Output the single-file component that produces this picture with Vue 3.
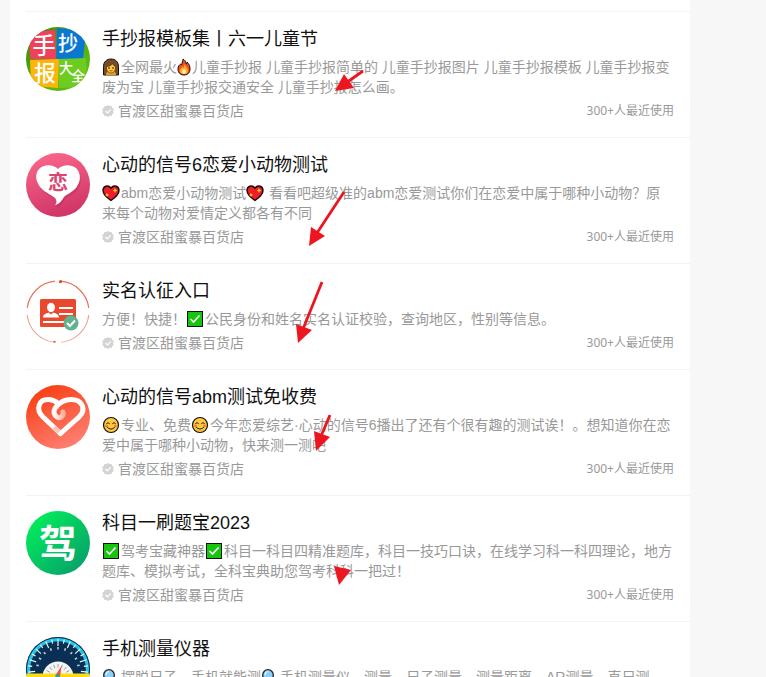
<script setup>
const shop = '官渡区甜蜜暴百货店'
const usage = '300+人最近使用'

const rows = [
  {
    id: 'poster',
    title: '手抄报模板集丨六一儿童节',
    parts: [
      { e: 'woman' },
      { t: '全网最火' },
      { e: 'fire' },
      { t: '儿童手抄报 儿童手抄报简单的 儿童手抄报图片 儿童手抄报模板 儿童手抄报变废为宝 儿童手抄报交通安全 儿童手抄报怎么画。' },
    ],
  },
  {
    id: 'love',
    title: '心动的信号6恋爱小动物测试',
    parts: [
      { e: 'heart' },
      { t: 'abm恋爱小动物测试' },
      { e: 'heart' },
      { t: ' 看看吧超级准的abm恋爱测试你们在恋爱中属于哪种小动物？原来每个动物对爱情定义都各有不同' },
    ],
  },
  {
    id: 'identity',
    title: '实名认征入口',
    parts: [
      { t: '方便！快捷！' },
      { e: 'check' },
      { t: '公民身份和姓名实名认证校验，查询地区，性别等信息。' },
    ],
  },
  {
    id: 'signal',
    title: '心动的信号abm测试免收费',
    parts: [
      { e: 'smile' },
      { t: '专业、免费' },
      { e: 'smile' },
      { t: '今年恋爱综艺·心动的信号6播出了还有个很有趣的测试诶！。想知道你在恋爱中属于哪种小动物，快来测一测吧' },
    ],
  },
  {
    id: 'driving',
    title: '科目一刷题宝2023',
    parts: [
      { e: 'check' },
      { t: '驾考宝藏神器' },
      { e: 'check' },
      { t: '科目一科目四精准题库，科目一技巧口诀，在线学习科一科四理论，地方题库、模拟考试，全科宝典助您驾考科科一把过！' },
    ],
  },
  {
    id: 'measure',
    title: '手机测量仪器',
    parts: [
      { e: 'search' },
      { t: '摆脱尺子，手机就能测' },
      { e: 'search' },
      { t: '手机测量仪，测量，尺子测量，测量距离，AR测量，直尺测' },
    ],
  },
]

const ticks = Array.from({ length: 17 }, (_, i) => -96 + i * 12)
const smallTicks = Array.from({ length: 9 }, (_, i) => -80 + i * 20)
</script>

<template>
  <main class="page">
    <svg class="sprite" aria-hidden="true">
      <symbol id="e-woman" viewBox="0 0 18 18">
        <path d="M1.500 17V8.500C1.500 4 4.500 1 9 1s7.500 3 7.500 7.500V17z" fill="#7a4a2b" stroke="#111" />
        <path d="M4 17c0-3 2-4 5-4s5 1 5 4z" fill="#e8a020" />
        <path d="M4.500 8.500c3 0 5-1 6-3 .6 1.500 1.500 2.500 3 3v1.500c0 3-2 5-4.500 5s-4.500-2-4.500-5z" fill="#ffc83d" stroke="#3b2411" stroke-width=".6" />
        <circle cx="7" cy="10" r=".8" fill="#111" /><circle cx="11" cy="10" r=".8" fill="#111" />
        <path d="M7.500 12.500q1.500 1 3 0" fill="none" stroke="#8a3b12" stroke-width=".8" />
      </symbol>
      <symbol id="e-fire" viewBox="0 0 14 18">
        <path d="M6 1c3 2 3 4 3 5 1 0 1-1 1-2 2 2 3 4 3 7 0 4-2.500 6-6 6s-6-2-6-6c0-3 1.500-4 2.500-5l1 1C5 5 6 3 6 1z" fill="#f0501c" stroke="#111" />
        <path d="M7 6c1 2 4 4 4 6.500S9.500 16 7 16s-4-1.500-4-3.500S5 10 5.500 8.500L7 10z" fill="#ffb02e" />
        <path d="M7 11c1 1 2 2 2 3s-1 1.800-2 1.800S5 15 5 14s1-2 2-3z" fill="#fff3a0" />
      </symbol>
      <symbol id="e-heart" viewBox="0 0 18 18">
        <path d="M9 16.500C4 13 1 10 1 6.500 1 2 6 .5 9 4c3-3.500 8-2 8 2.500 0 3.500-3 6.500-8 10z" fill="#ef1d27" stroke="#150505" stroke-width="1.400" />
        <path d="M13 4l.8 1.700 1.700.8-1.700.8L13 9l-.8-1.700-1.700-.8 1.700-.8zM5 9l.7 1.300L7 11l-1.300.7L5 13l-.7-1.300L3 11l1.300-.7z" fill="#ffc928" />
      </symbol>
      <symbol id="e-check" viewBox="0 0 18 18">
        <rect x="1.500" y="1.500" width="15" height="15" fill="#16c60c" stroke="#111" />
        <path d="M4.500 9l3 3 6-6.500" fill="none" stroke="#fff" stroke-width="1.600" />
      </symbol>
      <symbol id="e-smile" viewBox="0 0 18 18">
        <circle cx="9" cy="9" r="7.500" fill="#ffc83d" stroke="#111" stroke-width="1.200" />
        <path d="M4.500 7.500q1.500-2 3 0M10.500 7.500q1.500-2 3 0M5 11q4 4.500 8 0" fill="none" stroke="#222" stroke-linecap="round" />
        <circle cx="4.500" cy="10" r="1.300" fill="#ff6a3c" /><circle cx="13.500" cy="10" r="1.300" fill="#ff6a3c" />
      </symbol>
      <symbol id="e-search" viewBox="0 0 18 18">
        <path d="M10.500 11.500l5 5" stroke="#111" stroke-width="3" />
        <circle cx="7" cy="7" r="5.300" fill="#8fd0fb" stroke="#222" stroke-width="1.300" />
        <path d="M4 7q0-3 3-3.500" fill="none" stroke="#fff" />
      </symbol>
    </svg>

    <section class="panel">
      <ul class="list">
        <li v-for="row in rows" :key="row.id" class="row">
          <svg class="avatar" viewBox="0 0 64 64" aria-hidden="true">
            <template v-if="row.id === 'poster'">
              <defs>
                <linearGradient id="leaf" x1="0" y1="0" x2="1" y2="1">
                  <stop offset="0" stop-color="#3b8a08" /><stop offset="1" stop-color="#68c714" />
                </linearGradient>
              </defs>
              <rect width="64" height="64" fill="url(#leaf)" />
              <path d="M3 5l26-2 1 29H4z" fill="#f0405a" />
              <path d="M31 1l29 3-3 28H30z" fill="#0878d2" />
              <path d="M4 33l29-1-1 29-27-2z" fill="#fdb509" />
              <path d="M33 32l27-1 1 29-28 1z" fill="#6ccc20" />
              <g class="glyph medium" fill="#fff">
                <text x="18" y="27" font-size="23">手</text>
                <text x="42" y="24" font-size="20">抄</text>
                <text x="19" y="54" font-size="22">报</text>
                <text x="40" y="46" font-size="14">大</text>
                <text x="52" y="54" font-size="14">全</text>
              </g>
            </template>
            <template v-else-if="row.id === 'love'">
              <defs>
                <linearGradient id="pink" x1="0" y1="0" x2="0.3" y2="1">
                  <stop offset="0" stop-color="#fd6b8d" /><stop offset="1" stop-color="#d23769" />
                </linearGradient>
              </defs>
              <rect width="64" height="64" fill="url(#pink)" />
              <path d="M32 17c5-6 14-5 19 0 5 6 3 15-2 20-4 3-8 4-10 6-2 3-4 8-10 10 2-3 2-6 0-8-3-3-8-4-12-8-6-6-9-14-4-20 5-5 14-6 19 0z" fill="#b52457" opacity=".35" transform="translate(1 2)" />
              <path d="M32 16c5-5 14-5 19 0 5 6 3 15-2 20-4 4-8 5-11 8-2 3-4 7-9 8 2-2 2-5 0-7-3-3-9-5-13-9-6-6-8-14-3-20 5-5 14-5 19 0z" fill="#fff" />
              <text class="glyph" x="32" y="37" font-size="20" fill="#dc456d">恋</text>
            </template>
            <template v-else-if="row.id === 'identity'">
              <rect width="64" height="64" fill="#fff" />
              <g fill="none" stroke="#e4755f" stroke-width="1.200">
                <path d="M1.200 29A31 31 0 0 1 29 2.200M35 2.200A31 31 0 0 1 62.800 29" />
                <path d="M1.200 36A31 31 0 0 0 28 63.500M62.800 36A31 31 0 0 1 35 63.500" opacity=".7" />
              </g>
              <circle cx="34.500" cy="2.700" r="1.600" fill="#e64a30" /><circle cx="28.500" cy="63" r="1.200" fill="#e64a30" />
              <rect x="14" y="20" width="36" height="28" rx="1.500" fill="#e9472e" />
              <ellipse cx="25" cy="28.500" rx="4" ry="4.700" fill="#fff" />
              <path d="M17 38.500c0-3 3-4 5.500-5l2.500 2 2.500-2c2.500 1 5.500 2 5.500 5z" fill="#fff" />
              <path d="M33 29h14M33 35h14M17 43h23" stroke="#fff" stroke-width="2.200" />
              <circle cx="45" cy="44" r="7.500" fill="#5fb38e" />
              <path d="M41 44l3 3 5-5.500" fill="none" stroke="#fff" stroke-width="2" />
            </template>
            <template v-else-if="row.id === 'signal'">
              <defs>
                <linearGradient id="coral" x1="0" y1="0" x2="0.5" y2="1">
                  <stop offset="0" stop-color="#f73708" /><stop offset="1" stop-color="#ff7b6c" />
                </linearGradient>
                <linearGradient id="curl" x1="0" y1="0" x2="1" y2="0">
                  <stop offset="0" stop-color="#fff" /><stop offset="1" stop-color="#ffb09d" />
                </linearGradient>
              </defs>
              <rect width="64" height="64" fill="url(#coral)" />
              <g fill="none" stroke-width="5" stroke-linecap="round" stroke-linejoin="round">
                <path d="M34.500 48.500L17 32C9 24 13 14.500 22 14.500c5 0 8 2 11 4.500" stroke="#fff" />
                <path d="M31 21c-4 4-4 8 0 11 3 2 7-1 6-5" stroke="url(#curl)" />
                <path d="M30 22c4-5 9-7.500 15-7.500C56 14.500 61 24 53 32L34.500 48.500" stroke="#fff" />
              </g>
              <path d="M28 42.500l5 4.500" stroke="#ffc5b9" stroke-width="4" />
            </template>
            <template v-else-if="row.id === 'driving'">
              <defs>
                <linearGradient id="green" x1="0.100" y1="0.100" x2="0.900" y2="0.900">
                  <stop offset="0" stop-color="#02ed5b" /><stop offset="1" stop-color="#07a16a" />
                </linearGradient>
              </defs>
              <rect width="64" height="64" fill="url(#green)" />
              <text class="glyph" x="32" y="46" font-size="38" fill="#fff">驾</text>
            </template>
            <template v-else>
              <rect width="64" height="64" fill="#092f55" />
              <circle cx="32" cy="32" r="29.500" fill="none" stroke="#25c5ea" stroke-width="3.500" />
              <circle cx="32" cy="32" r="31.500" fill="none" stroke="#12314d" />
              <g stroke="#e9f6fa" stroke-width="1.200">
                <path v-for="(a, i) in ticks" :key="a" :d="i % 2 ? 'M32 2v4' : 'M32 2v7'" :transform="`rotate(${a} 32 32)`" />
              </g>
              <g stroke="#b9cad8" stroke-width="1.600">
                <path v-for="a in smallTicks" :key="a" d="M32 10v2.500" :transform="`rotate(${a} 32 32)`" />
              </g>
              <circle cx="32" cy="40" r="15.500" fill="#f4f4f2" />
              <g stroke="#8593a0" stroke-width=".8">
                <path v-for="a in smallTicks" :key="a" d="M32 27v3.500" :transform="`rotate(${a} 32 40)`" />
              </g>
              <path d="M0 36.500h64V64H0z" fill="#ffdc14" />
              <path d="M29 39l6.500-10L34 40z" fill="#ed5144" />
              <circle cx="31.500" cy="39" r="2" fill="#20a8a0" />
            </template>
          </svg>

          <div class="body">
            <h3 class="title"><a href="#">{{ row.title }}</a></h3>
            <p class="desc"><template v-for="(p, i) in row.parts" :key="i"><svg v-if="p.e" class="emoji" :class="{ narrow: p.e === 'fire' }" aria-hidden="true"><use :href="'#e-' + p.e" /></svg><template v-else>{{ p.t }}</template></template></p>
            <div class="meta">
              <span class="shop">
                <svg class="badge" viewBox="0 0 12 12" aria-hidden="true">
                  <path d="M6 0l1.600 1 1.900-.1.700 1.800L11.700 4l-.5 2 .5 2-1.500 1.300-.7 1.800-1.900-.1L6 12l-1.600-1-1.900.1-.7-1.800L.3 8l.5-2-.5-2 1.500-1.300.7-1.800 1.900.1z" fill="#d4d4d4" />
                  <path d="M3.500 6l2 2 3.200-3.600" fill="none" stroke="#fff" stroke-width="1.200" />
                </svg>
                {{ shop }}
              </span>
              <span class="usage">{{ usage }}</span>
            </div>
          </div>
        </li>
      </ul>
    </section>

    <!-- Hand-placed annotation arrows over the list -->
    <svg class="arrows" width="400" height="600" viewBox="0 0 400 600" aria-hidden="true">
      <g stroke="#ed1620" stroke-width="2.800">
        <path d="M363 71L346 83M344 192L317 233M322 282L303 329M330 415L321 436" />
      </g>
      <g fill="#ed1620">
        <path d="M335 91L344 74L354 88z" />
        <path d="M309 246L311 227L325 236z" />
        <path d="M298 343L296 324L312 330z" />
        <path d="M316 451L314 431L330 437z" />
        <path d="M339 585L334 566L351 570z" />
      </g>
    </svg>
  </main>
</template>

<style>
body {
  margin: 0;
  background: #f7f7f7;
}
</style>

<style scoped>
.page {
  position: relative;
  height: 100vh;
  overflow: hidden;
  background: #f7f7f7;
  font-family: "Liberation Sans", "Noto Sans CJK SC", sans-serif;
  color: #999;
}
.sprite {
  position: absolute;
  width: 0;
  height: 0;
}
.panel {
  min-height: 100%;
  margin: 0 76px 0 10px;
  padding: 11px 0 0 16px;
  box-sizing: border-box;
  background: #fff;
}
.list {
  margin: 0;
  padding: 0;
  list-style: none;
}
.row {
  display: flex;
  gap: 12px;
  padding: 15px 16px 16px 0;
  border-top: 1px solid #f4f4f4;
}
.avatar {
  flex: none;
  width: 64px;
  height: 64px;
  border-radius: 50%;
}
.glyph {
  font-family: "Noto Sans CJK SC", sans-serif;
  font-weight: 700;
  text-anchor: middle;
}
.glyph.medium {
  font-weight: 500;
}
.body {
  flex: 1;
  min-width: 0;
}
.title {
  margin: 0 0 6px;
  font-size: 18px;
  font-weight: 400;
  line-height: 24px;
}
.title a {
  color: #111;
  text-decoration: none;
}
.desc {
  margin: 0 0 4px;
  font-size: 14px;
  line-height: 20px;
}
.emoji {
  width: 18px;
  height: 18px;
  margin: 0 1px 0 0;
  vertical-align: -4px;
}
.emoji.narrow {
  width: 14px;
}
.meta {
  display: flex;
  align-items: center;
  justify-content: space-between;
  line-height: 20px;
}
.shop {
  display: flex;
  align-items: center;
  gap: 4px;
  font-size: 14px;
}
.badge {
  width: 12px;
  height: 12px;
}
.usage {
  font-family: "Noto Sans", "Noto Sans CJK SC", sans-serif;
  font-size: 12px;
}
.arrows {
  position: absolute;
  top: 0;
  left: 0;
  pointer-events: none;
}
</style>
